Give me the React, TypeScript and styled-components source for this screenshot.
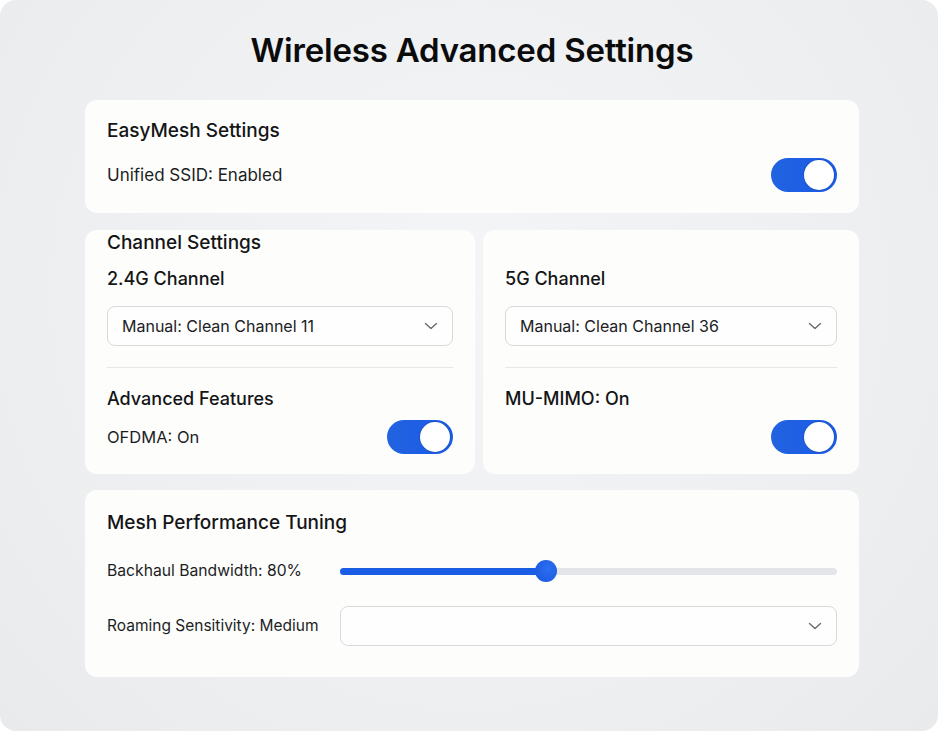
import React from "react";
import styled, { createGlobalStyle } from "styled-components";

const GlobalStyle = createGlobalStyle`
  html, body {
    margin: 0;
    padding: 0;
    background: #ffffff;
  }
  body {
    font-family: Inter, "Noto Sans", "Liberation Sans", sans-serif;
    color: #161718;
  }
`;

const Frame = styled.div`
  width: 938px;
  height: 731px;
  box-sizing: border-box;
  border-radius: 16px;
  background: radial-gradient(circle at 50% 40%, #f4f5f6 0%, #eceef0 70%, #e8eaec 100%);
  padding: 30px 79px 0 85px;
  display: flex;
  flex-direction: column;
  gap: 16px;
`;

const Title = styled.h1`
  margin: 0 0 14px;
  text-align: center;
  font-size: 33px;
  font-weight: 600;
  letter-spacing: -0.2px;
  line-height: 40px;
  color: #0b0b0c;
`;

const Card = styled.section<{ $pt?: number; $pb?: number }>`
  background: #fdfdfc;
  border-radius: 12px;
  padding: ${(p) => p.$pt ?? 18}px 22px ${(p) => p.$pb ?? 21}px;
  box-sizing: border-box;
  display: flex;
  flex-direction: column;
`;

const Row = styled.div`
  display: grid;
  grid-template-columns: 390px 376px;
  gap: 8px;
  margin-top: 1px;
`;

const CardTitle = styled.h2<{ $mb?: number }>`
  margin: 0 0 ${(p) => p.$mb ?? 14}px;
  font-size: 19px;
  font-weight: 500;
  line-height: 26px;
  color: #141516;
`;

const SubTitle = styled.h3<{ $mb?: number }>`
  margin: 0 0 ${(p) => p.$mb ?? 14}px;
  font-size: 18px;
  font-weight: 500;
  line-height: 26px;
  color: #141516;
`;

const Label = styled.span<{ $size?: number }>`
  font-size: ${(p) => p.$size ?? 16.5}px;
  line-height: 22px;
  color: #1c1d1f;
`;

const ToggleRow = styled.div`
  display: flex;
  align-items: center;
  justify-content: space-between;
  min-height: 34px;
`;

const Track = styled.div`
  width: 66px;
  height: 34px;
  border-radius: 17px;
  background: linear-gradient(90deg, #2163e0, #1a5ae8);
  display: flex;
  align-items: center;
  justify-content: flex-end;
  padding: 2px 3px;
  box-sizing: border-box;
`;

const Knob = styled.div`
  width: 30px;
  height: 30px;
  border-radius: 50%;
  background: #ffffff;
  box-shadow: 0 0 0 1px #1f55c9;
`;

const Toggle = () => (
  <Track>
    <Knob />
  </Track>
);

const SelectBox = styled.div`
  height: 40px;
  flex-shrink: 0;
  border: 1px solid #d9dadc;
  border-radius: 8px;
  background: #fefefe;
  box-sizing: border-box;
  display: flex;
  align-items: center;
  justify-content: space-between;
  padding: 0 14px 0 14px;
  font-size: 16px;
  color: #202124;
`;

const Chevron = () => (
  <svg width="14" height="14" viewBox="0 0 14 14" fill="none">
    <path d="M1.5 4.5 L7 9.5 L12.5 4.5" stroke="#6a6c70" strokeWidth="1.4" strokeLinecap="round" strokeLinejoin="round" />
  </svg>
);

const Select = ({ value }: { value?: string }) => (
  <SelectBox>
    <span>{value ?? ""}</span>
    <Chevron />
  </SelectBox>
);

const Divider = styled.hr`
  border: none;
  border-top: 1px solid #e6e7e9;
  margin: 21px 0 18px;
`;

const TuneRow = styled.div`
  display: grid;
  grid-template-columns: 233px 1fr;
  align-items: center;
  min-height: 40px;
`;

const TuneList = styled.div`
  display: flex;
  flex-direction: column;
  gap: 15px;
`;

const SliderWrap = styled.div`
  position: relative;
  height: 22px;
  display: flex;
  align-items: center;
`;

const SliderTrack = styled.div`
  width: 100%;
  height: 7px;
  border-radius: 4px;
  background: #e3e5e8;
  overflow: hidden;
`;

const SliderFill = styled.div`
  height: 100%;
  background: #1b5ee6;
`;

const Thumb = styled.div`
  position: absolute;
  top: 0;
  width: 22px;
  height: 22px;
  margin-left: -11px;
  border-radius: 50%;
  background: radial-gradient(circle at 60% 40%, #2c6ff0, #1855de);
`;

const Slider = ({ pos }: { pos: number }) => (
  <SliderWrap>
    <SliderTrack>
      <SliderFill style={{ width: `${pos}%` }} />
    </SliderTrack>
    <Thumb style={{ left: `${pos}%` }} />
  </SliderWrap>
);

export default function App() {
  return (
    <>
      <GlobalStyle />
      <Frame>
        <Title>Wireless Advanced Settings</Title>

        <Card>
          <CardTitle $mb={14}>EasyMesh Settings</CardTitle>
          <ToggleRow>
            <Label $size={17}>Unified SSID: Enabled</Label>
            <Toggle />
          </ToggleRow>
        </Card>

        <Row>
          <Card $pt={0} $pb={20}>
            <CardTitle $mb={10}>Channel Settings</CardTitle>
            <SubTitle>2.4G Channel</SubTitle>
            <Select value="Manual: Clean Channel 11" />
            <Divider />
            <SubTitle $mb={8}>Advanced Features</SubTitle>
            <ToggleRow>
              <Label>OFDMA: On</Label>
              <Toggle />
            </ToggleRow>
          </Card>
          <Card $pt={36} $pb={20}>
            <SubTitle>5G Channel</SubTitle>
            <Select value="Manual: Clean Channel 36" />
            <Divider />
            <SubTitle $mb={8}>MU-MIMO: On</SubTitle>
            <ToggleRow>
              <Label />
              <Toggle />
            </ToggleRow>
          </Card>
        </Row>

        <Card $pt={20} $pb={31}>
          <CardTitle $mb={15}>Mesh Performance Tuning</CardTitle>
          <TuneList>
            <TuneRow>
              <Label $size={15.7}>Backhaul Bandwidth: 80%</Label>
              <Slider pos={41.5} />
            </TuneRow>
            <TuneRow>
              <Label $size={15.5}>Roaming Sensitivity: Medium</Label>
              <Select />
            </TuneRow>
          </TuneList>
        </Card>
      </Frame>
    </>
  );
}
